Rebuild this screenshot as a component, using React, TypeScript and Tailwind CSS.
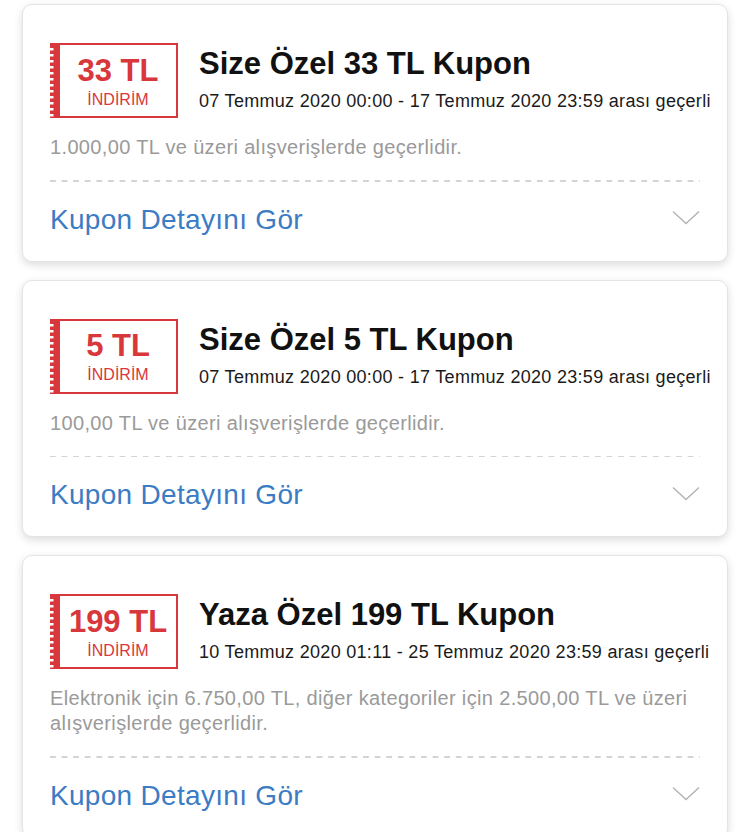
import React from "react";

type Coupon = {
  amount: string;
  title: string;
  date: string;
  desc: string;
};

const coupons: Coupon[] = [
  {
    amount: "33 TL",
    title: "Size Özel 33 TL Kupon",
    date: "07 Temmuz 2020 00:00 - 17 Temmuz 2020 23:59 arası geçerli",
    desc: "1.000,00 TL ve üzeri alışverişlerde geçerlidir.",
  },
  {
    amount: "5 TL",
    title: "Size Özel 5 TL Kupon",
    date: "07 Temmuz 2020 00:00 - 17 Temmuz 2020 23:59 arası geçerli",
    desc: "100,00 TL ve üzeri alışverişlerde geçerlidir.",
  },
  {
    amount: "199 TL",
    title: "Yaza Özel 199 TL Kupon",
    date: "10 Temmuz 2020 01:11 - 25 Temmuz 2020 23:59 arası geçerli",
    desc: "Elektronik için 6.750,00 TL, diğer kategoriler için 2.500,00 TL ve üzeri alışverişlerde geçerlidir.",
  },
];

function Comb() {
  const notches = [];
  for (let y = 5; y < 72; y += 6) {
    notches.push(<rect key={y} x={0} y={y} width={3.5} height={2.5} fill="#ffffff" />);
  }
  return (
    <svg width="10" height="75" viewBox="0 0 10 75" className="block shrink-0">
      <rect x="0" y="0" width="10" height="75" fill="#d8373b" />
      {notches}
    </svg>
  );
}

function Badge({ amount }: { amount: string }) {
  return (
    <div className="flex h-[75px] w-[128px] shrink-0">
      <Comb />
      <div className="flex flex-1 flex-col items-center justify-center border-y-2 border-r-2 border-[#d8373b] pt-[2px] text-[#d8373b]">
        <div className="text-[31px] font-bold leading-[31px]">{amount}</div>
        <div className="mt-[5px] text-[16px] leading-[18px]">İNDİRİM</div>
      </div>
    </div>
  );
}

function Chevron() {
  return (
    <svg width="28" height="15" viewBox="0 0 28 15" className="mb-[4px] shrink-0">
      <polyline points="1,1.5 14,13.5 27,1.5" fill="none" stroke="#b3b3b3" strokeWidth="1.4" />
    </svg>
  );
}

function Card({ c }: { c: Coupon }) {
  return (
    <div className="rounded-[10px] border border-[#e4e4e4] bg-white px-[27px] pb-[24px] pt-[38px] shadow-[0_3px_8px_rgba(0,0,0,0.14)]">
      <div className="flex">
        <Badge amount={c.amount} />
        <div className="ml-[21px] min-w-0 pt-[3px]">
          <div className="whitespace-nowrap text-[31px] font-bold leading-[36px] text-[#111111]">{c.title}</div>
          <div className="mt-[9px] whitespace-nowrap text-[18px] leading-[20px] tracking-[0.3px] text-[#1a1a1a]">
            {c.date}
          </div>
        </div>
      </div>
      <div className="mt-[17px] text-[20px] leading-[25px] tracking-[0.35px] text-[#9a9a9a]">{c.desc}</div>
      <div className="mt-[20px] h-[1.5px] bg-[linear-gradient(to_right,#d4d4d4_52%,transparent_52%)] bg-[length:11.6px_1.5px] bg-repeat-x" />
      <div className="mt-[21px] flex items-center justify-between">
        <div className="text-[28px] leading-[34px] tracking-[0.3px] text-[#3b7cc4]">Kupon Detayını Gör</div>
        <Chevron />
      </div>
    </div>
  );
}

export default function App() {
  return (
    <div className="min-h-[832px] bg-white px-[22px] pt-[4px] font-['Liberation_Sans',Arial,sans-serif]">
      <div className="flex flex-col gap-[18px]">
        {coupons.map((c, i) => (
          <Card key={i} c={c} />
        ))}
      </div>
    </div>
  );
}
